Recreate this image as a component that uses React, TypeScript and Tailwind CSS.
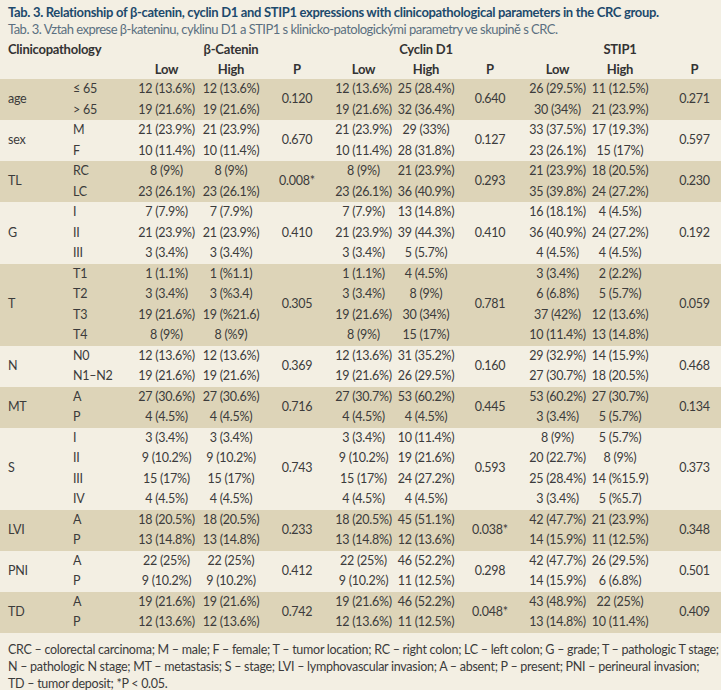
import React from "react";

type Group = {
  label: string;
  subs: string[];
  b: [string, string][];
  bp: string;
  c: [string, string][];
  cp: string;
  s: [string, string][];
  sp: string;
};

const groups: Group[] = [
  {
    label: "age",
    subs: ["≤ 65", "> 65"],
    b: [["12 (13.6%)", "12 (13.6%)"], ["19 (21.6%)", "19 (21.6%)"]],
    bp: "0.120",
    c: [["12 (13.6%)", "25 (28.4%)"], ["19 (21.6%)", "32 (36.4%)"]],
    cp: "0.640",
    s: [["26 (29.5%)", "11 (12.5%)"], ["30 (34%)", "21 (23.9%)"]],
    sp: "0.271",
  },
  {
    label: "sex",
    subs: ["M", "F"],
    b: [["21 (23.9%)", "21 (23.9%)"], ["10 (11.4%)", "10 (11.4%)"]],
    bp: "0.670",
    c: [["21 (23.9%)", "29 (33%)"], ["10 (11.4%)", "28 (31.8%)"]],
    cp: "0.127",
    s: [["33 (37.5%)", "17 (19.3%)"], ["23 (26.1%)", "15 (17%)"]],
    sp: "0.597",
  },
  {
    label: "TL",
    subs: ["RC", "LC"],
    b: [["8 (9%)", "8 (9%)"], ["23 (26.1%)", "23 (26.1%)"]],
    bp: "0.008*",
    c: [["8 (9%)", "21 (23.9%)"], ["23 (26.1%)", "36 (40.9%)"]],
    cp: "0.293",
    s: [["21 (23.9%)", "18 (20.5%)"], ["35 (39.8%)", "24 (27.2%)"]],
    sp: "0.230",
  },
  {
    label: "G",
    subs: ["I", "II", "III"],
    b: [["7 (7.9%)", "7 (7.9%)"], ["21 (23.9%)", "21 (23.9%)"], ["3 (3.4%)", "3 (3.4%)"]],
    bp: "0.410",
    c: [["7 (7.9%)", "13 (14.8%)"], ["21 (23.9%)", "39 (44.3%)"], ["3 (3.4%)", "5 (5.7%)"]],
    cp: "0.410",
    s: [["16 (18.1%)", "4 (4.5%)"], ["36 (40.9%)", "24 (27.2%)"], ["4 (4.5%)", "4 (4.5%)"]],
    sp: "0.192",
  },
  {
    label: "T",
    subs: ["T1", "T2", "T3", "T4"],
    b: [["1 (1.1%)", "1 (%1.1)"], ["3 (3.4%)", "3 (%3.4)"], ["19 (21.6%)", "19 (%21.6)"], ["8 (9%)", "8 (%9)"]],
    bp: "0.305",
    c: [["1 (1.1%)", "4 (4.5%)"], ["3 (3.4%)", "8 (9%)"], ["19 (21.6%)", "30 (34%)"], ["8 (9%)", "15 (17%)"]],
    cp: "0.781",
    s: [["3 (3.4%)", "2 (2.2%)"], ["6 (6.8%)", "5 (5.7%)"], ["37 (42%)", "12 (13.6%)"], ["10 (11.4%)", "13 (14.8%)"]],
    sp: "0.059",
  },
  {
    label: "N",
    subs: ["N0", "N1–N2"],
    b: [["12 (13.6%)", "12 (13.6%)"], ["19 (21.6%)", "19 (21.6%)"]],
    bp: "0.369",
    c: [["12 (13.6%)", "31 (35.2%)"], ["19 (21.6%)", "26 (29.5%)"]],
    cp: "0.160",
    s: [["29 (32.9%)", "14 (15.9%)"], ["27 (30.7%)", "18 (20.5%)"]],
    sp: "0.468",
  },
  {
    label: "MT",
    subs: ["A", "P"],
    b: [["27 (30.6%)", "27 (30.6%)"], ["4 (4.5%)", "4 (4.5%)"]],
    bp: "0.716",
    c: [["27 (30.7%)", "53 (60.2%)"], ["4 (4.5%)", "4 (4.5%)"]],
    cp: "0.445",
    s: [["53 (60.2%)", "27 (30.7%)"], ["3 (3.4%)", "5 (5.7%)"]],
    sp: "0.134",
  },
  {
    label: "S",
    subs: ["I", "II", "III", "IV"],
    b: [["3 (3.4%)", "3 (3.4%)"], ["9 (10.2%)", "9 (10.2%)"], ["15 (17%)", "15 (17%)"], ["4 (4.5%)", "4 (4.5%)"]],
    bp: "0.743",
    c: [["3 (3.4%)", "10 (11.4%)"], ["9 (10.2%)", "19 (21.6%)"], ["15 (17%)", "24 (27.2%)"], ["4 (4.5%)", "4 (4.5%)"]],
    cp: "0.593",
    s: [["8 (9%)", "5 (5.7%)"], ["20 (22.7%)", "8 (9%)"], ["25 (28.4%)", "14 (%15.9)"], ["3 (3.4%)", "5 (%5.7)"]],
    sp: "0.373",
  },
  {
    label: "LVI",
    subs: ["A", "P"],
    b: [["18 (20.5%)", "18 (20.5%)"], ["13 (14.8%)", "13 (14.8%)"]],
    bp: "0.233",
    c: [["18 (20.5%)", "45 (51.1%)"], ["13 (14.8%)", "12 (13.6%)"]],
    cp: "0.038*",
    s: [["42 (47.7%)", "21 (23.9%)"], ["14 (15.9%)", "11 (12.5%)"]],
    sp: "0.348",
  },
  {
    label: "PNI",
    subs: ["A", "P"],
    b: [["22 (25%)", "22 (25%)"], ["9 (10.2%)", "9 (10.2%)"]],
    bp: "0.412",
    c: [["22 (25%)", "46 (52.2%)"], ["9 (10.2%)", "11 (12.5%)"]],
    cp: "0.298",
    s: [["42 (47.7%)", "26 (29.5%)"], ["14 (15.9%)", "6 (6.8%)"]],
    sp: "0.501",
  },
  {
    label: "TD",
    subs: ["A", "P"],
    b: [["19 (21.6%)", "19 (21.6%)"], ["12 (13.6%)", "12 (13.6%)"]],
    bp: "0.742",
    c: [["19 (21.6%)", "46 (52.2%)"], ["12 (13.6%)", "11 (12.5%)"]],
    cp: "0.048*",
    s: [["43 (48.9%)", "22 (25%)"], ["13 (14.8%)", "10 (11.4%)"]],
    sp: "0.409",
  },
];

const Cell = ({ children, cls }: { children: React.ReactNode; cls: string }) => (
  <div className={`h-[20.5px] flex items-center ${cls}`}>{children}</div>
);

function Col({ items, w }: { items: string[]; w: string }) {
  return (
    <div className={`flex flex-col ${w}`}>
      {items.map((t, i) => (
        <Cell key={i} cls="justify-center whitespace-nowrap">
          {t}
        </Cell>
      ))}
    </div>
  );
}

function GroupRow({ g, shaded }: { g: Group; shaded: boolean }) {
  return (
    <div className={`flex ${shaded ? "bg-[#ddd4b8]" : "bg-[#f3efe3]"}`}>
      <div className="w-[65px] pl-[8px] flex items-center">{g.label}</div>
      <div className="w-[70px] pl-[8px] flex flex-col">
        {g.subs.map((s, i) => (
          <Cell key={i} cls="">
            {s}
          </Cell>
        ))}
      </div>
      <Col w="w-[63px]" items={g.b.map((r) => r[0])} />
      <Col w="w-[66px]" items={g.b.map((r) => r[1])} />
      <div className="w-[66px] flex items-center justify-center">{g.bp}</div>
      <Col w="w-[67px]" items={g.c.map((r) => r[0])} />
      <Col w="w-[58px]" items={g.c.map((r) => r[1])} />
      <div className="w-[70px] flex items-center justify-center">{g.cp}</div>
      <Col w="w-[65px]" items={g.s.map((r) => r[0])} />
      <Col w="w-[60px]" items={g.s.map((r) => r[1])} />
      <div className="w-[71px] pl-[18px] flex items-center justify-center">{g.sp}</div>
    </div>
  );
}

export default function App() {
  return (
    <div
      className="w-[721px] h-[690px] bg-[#f3efe3] text-[#3b3b3b] text-[12.5px] tracking-[-0.02em] leading-none overflow-hidden"
      style={{ fontFamily: "Lato, 'Open Sans', sans-serif" }}
    >
      <div className="pt-[4px] pl-[8px]">
        <div className="h-[17px] flex items-center font-bold text-[13px] tracking-[-0.025em] text-[#1d4a6c] whitespace-nowrap">
          Tab. 3. Relationship of β-catenin, cyclin D1 and STIP1 expressions with clinicopathological parameters in the CRC group.
        </div>
        <div className="h-[17px] flex items-center text-[13px] tracking-[-0.04em] text-[#5b6f80] whitespace-nowrap">
          Tab. 3. Vztah exprese β-kateninu, cyklinu D1 a STIP1 s klinicko-patologickými parametry ve skupině s CRC.
        </div>
      </div>
      <div className="font-bold text-[#333] text-[13px]">
        <div className="flex h-[20px] items-center pt-[3px]">
          <div className="w-[198px] pl-[8px]">Clinicopathology</div>
          <div className="w-[66px] text-center whitespace-nowrap">β-Catenin</div>
          <div className="w-[133px]"></div>
          <div className="w-[58px] text-center whitespace-nowrap">Cyclin D1</div>
          <div className="w-[135px]"></div>
          <div className="w-[60px] text-center">STIP1</div>
        </div>
        <div className="flex h-[21px] items-center pt-[2px]">
          <div className="w-[135px]"></div>
          <div className="w-[63px] text-center">Low</div>
          <div className="w-[66px] text-center">High</div>
          <div className="w-[66px] text-center">P</div>
          <div className="w-[67px] text-center">Low</div>
          <div className="w-[58px] text-center">High</div>
          <div className="w-[70px] text-center">P</div>
          <div className="w-[65px] text-center">Low</div>
          <div className="w-[60px] text-center">High</div>
          <div className="w-[71px] pl-[18px] text-center">P</div>
        </div>
      </div>
      <div className="flex flex-col">
        {groups.map((g, i) => (
          <GroupRow key={g.label} g={g} shaded={i % 2 === 0} />
        ))}
      </div>
      <div className="pt-[8px] pl-[8px] pr-[8px] text-[12.5px] leading-[17px] tracking-[-0.022em] text-[#3b3b3b]">
        <div className="whitespace-nowrap">
          CRC – colorectal carcinoma; M – male; F – female; T – tumor location; RC – right colon; LC – left colon; G – grade; T – pathologic T stage;
        </div>
        <div className="whitespace-nowrap">
          N – pathologic N stage; MT – metastasis; S – stage; LVI – lymphovascular invasion; A – absent; P – present; PNI – perineural invasion;
        </div>
        <div className="whitespace-nowrap">TD – tumor deposit; *P &lt; 0.05.</div>
      </div>
    </div>
  );
}
